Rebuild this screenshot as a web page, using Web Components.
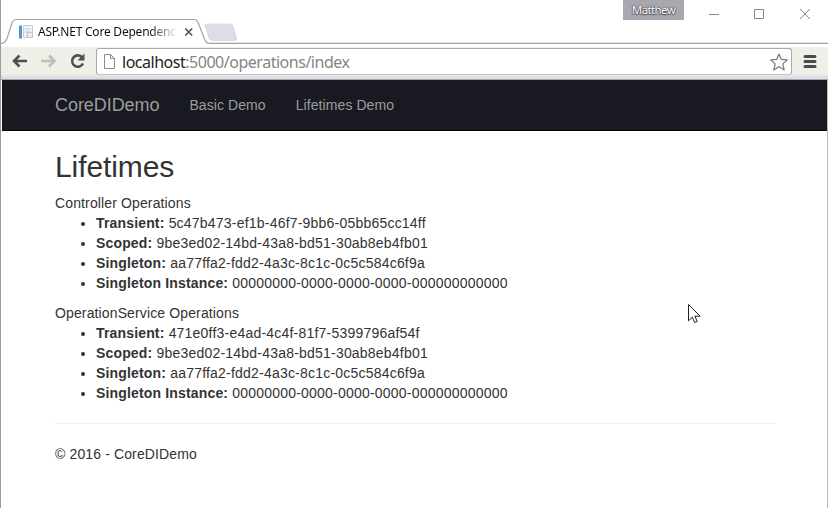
<!DOCTYPE html>
<html lang="en">
<head>
<meta charset="utf-8">
<title>ASP.NET Core Dependency Injection</title>
<style>
html,body{margin:0;height:100%;overflow:hidden;background:#fff}
body{font-family:"Liberation Sans",Arial,sans-serif}
</style>
</head>
<body>
<browser-window>
  <browser-tabs slot="tabs" user="Matthew"><span>ASP.NET Core Dependency</span></browser-tabs>
  <browser-toolbar slot="toolbar"><span slot="host">localhost</span><span slot="path">:5000/operations/index</span></browser-toolbar>
  <site-nav><span slot="brand">CoreDIDemo</span><span>Basic Demo</span><span>Lifetimes Demo</span></site-nav>
  <site-page>
    <span slot="title">Lifetimes</span>
    <operation-list heading="Controller Operations">
      <operation-item name="Transient:">5c47b473-ef1b-46f7-9bb6-05bb65cc14ff</operation-item>
      <operation-item name="Scoped:">9be3ed02-14bd-43a8-bd51-30ab8eb4fb01</operation-item>
      <operation-item name="Singleton:">aa77ffa2-fdd2-4a3c-8c1c-0c5c584c6f9a</operation-item>
      <operation-item name="Singleton Instance:">00000000-0000-0000-0000-000000000000</operation-item>
    </operation-list>
    <operation-list heading="OperationService Operations">
      <operation-item name="Transient:">471e0ff3-e4ad-4c4f-81f7-5399796af54f</operation-item>
      <operation-item name="Scoped:">9be3ed02-14bd-43a8-bd51-30ab8eb4fb01</operation-item>
      <operation-item name="Singleton:">aa77ffa2-fdd2-4a3c-8c1c-0c5c584c6f9a</operation-item>
      <operation-item name="Singleton Instance:">00000000-0000-0000-0000-000000000000</operation-item>
    </operation-list>
    <span slot="footer">© 2016 - CoreDIDemo</span>
  </site-page>
</browser-window>
<mouse-pointer></mouse-pointer>
<script>
const define = (name, html) => customElements.define(name, class extends HTMLElement {
  constructor() {
    super();
    this.attachShadow({mode: 'open'}).innerHTML = html;
  }
  connectedCallback() {
    this.shadowRoot.querySelectorAll('[data-attr]').forEach(el => {
      el.textContent = this.getAttribute(el.dataset.attr);
    });
  }
});

define('browser-window', `<style>
:host{display:flex;flex-direction:column;height:508px;width:828px;box-sizing:border-box}
.body{flex:1;border-left:1px solid #9c9c9c;border-right:1px solid #b8b8bc;background:#fff;padding-left:1px}
</style><slot name="tabs"></slot><slot name="toolbar"></slot><div class="body"><slot></slot></div>`);

define('browser-tabs', `<style>
:host{display:block;position:relative;height:47px;background:#fff;font:12px/16px "Noto Sans",sans-serif;color:#111}
.bg{position:absolute;left:0;top:0}
.row{position:relative;display:flex;align-items:flex-start}
.fav{margin:24px 3px 0 18px;flex:none}
.title{width:138px;margin-top:24px;overflow:hidden;white-space:nowrap;letter-spacing:-.22px;-webkit-mask-image:linear-gradient(90deg,#000 112px,transparent 140px);mask-image:linear-gradient(90deg,#000 112px,transparent 140px)}
.close{margin:27px 0 0 8px;flex:none}
.user{box-sizing:border-box;width:61px;height:20px;margin-left:429px;background:#a9a8b1;color:#fff;font-size:11.500px;line-height:20px;text-align:center;text-shadow:0 0 1px #333,0 0 2px #444,0 1px 1px #555;letter-spacing:-.6px}
.controls{margin:8px 0 0 24px}
</style>
<svg class="bg" width="828" height="47" fill="none">
<path d="M.5 0v47" stroke="#9c9c9c"/>
<path d="M205 25q1-1 2-1h23q2 0 3 2l3.500 12q.5 2-1.500 2.500h-22q-3 0-4-2z" fill="#dddde7" stroke="#d2d2d6" stroke-width=".7"/>
<path d="M1 43.500q4 0 6-5L12 23q1.300-3.500 4-3.500H194q3 0 4.500 4l6 15.500q1.500 4.500 5 4.500H828" stroke="#a5a4a7" stroke-width="1.200"/>
<path d="M208 42.500H828" stroke="#dedee9"/>
</svg>
<div class="row">
<svg class="fav" width="17" height="16" fill="none"><path d="M1 1.500h3v13H1z" fill="#4d97c9"/><path d="M5.500 1.500h9v12h-9z" fill="#f0f3f6" stroke="#c4cdd6"/><path d="M7 5h5M7 8h6M8 11h6" stroke="#bac7d3"/><path d="M9.500 8.500h5v5h-5z" fill="#eee" stroke="#c6c6c6"/></svg>
<div class="title"><slot></slot></div>
<svg class="close" width="10" height="10"><path d="M1.200 1.500l7 7M8.200 1.500l-7 7" stroke="#555" stroke-width="1.700"/></svg>
<div class="user" data-attr="user"></div>
<svg class="controls" width="106" height="13" fill="none" stroke="#888"><path d="M1 6.500h10M46.500 1.500h9v9h-9zM92 1l10 10M102 1L92 11"/></svg>
</div>`);

define('browser-toolbar', `<style>
:host{display:flex;box-sizing:border-box;height:33px;padding:1px 7px 0 9px;background:linear-gradient(#efeee7 0 27px,#dedee8 30px);border-left:1px solid #9c9c9c;border-bottom:1px solid #a4a4a8;font:16px/26px "Noto Sans",sans-serif}
.nav{width:86px;height:26px;flex:none}
.address{display:flex;width:696px;height:27px;box-sizing:border-box;border:1px solid #aaa9a7;border-bottom-color:#c3c2bd;border-radius:3px;background:#fff;align-items:center;padding:0 2px 0 6px}
.url{flex:1;margin-left:6px;white-space:pre;color:#858585;letter-spacing:-.48px}
.host{color:#222}
.menu{margin:6px 0 0 11px}
.page{flex:none}
</style>
<svg class="nav" fill="none" stroke-width="2.600"><path d="M17 13H4M9.500 7.500L4 13l5.500 5.500" stroke="#505052"/><path d="M31 13h13M39 7.500l5.500 5.500-5.500 5.500" stroke="#bdbdbb"/><path d="M73 15.500a5.700 5.700 0 1 1-1.200-6.500" stroke="#505052"/><path d="M74.500 5.500v7h-7z" fill="#505052"/></svg>
<div class="address">
<svg class="page" width="13" height="17" fill="#fff" stroke="#8c8c8c"><path d="M1.500 1.500h6l4 4v10h-10zM7.500 1.500v4h4"/></svg>
<div class="url"><slot class="host" name="host"></slot><slot name="path"></slot></div>
<svg width="20" height="20" fill="#fff" stroke="#777" stroke-width="1.200" stroke-linejoin="round"><path d="M10 2l2.300 5.400 6 .5-4.500 4 1.400 6L10 14.700 4.800 17.900l1.400-6-4.500-4 6-.5z"/></svg>
</div>
<svg class="menu" width="14" height="15" stroke="#4c4b4c" stroke-width="3" stroke-linecap="round"><path d="M2 2.500h10M2 7.500h10M2 12.500h10"/></svg>`);

define('site-nav', `<style>
:host{display:flex;box-sizing:border-box;height:51px;background:#191921;border-bottom:1px solid #050508;padding-left:53px;color:#9d9d9d;font-size:14px;line-height:50px;gap:30px;letter-spacing:.08px}
::slotted([slot=brand]){font-size:18px;letter-spacing:-.06px}
</style><slot name="brand"></slot><slot></slot>`);

define('site-page', `<style>
:host{display:block;width:720px;padding:19px 0 0 53px;font-size:14px;line-height:20px;color:#333;letter-spacing:.13px}
h2{margin:0 0 10px;font-size:30px;line-height:33px;font-weight:500;letter-spacing:-.1px}
hr{margin:20px 0;border:0;border-top:1px solid #eee}
p{margin:0}
</style><h2><slot name="title"></slot></h2><slot></slot><hr><p><slot name="footer"></slot></p>`);

define('operation-list', `<style>
:host{display:block;margin-bottom:10px}
:host(:last-of-type){margin-bottom:0}
ul{margin:0;padding-left:41px}
</style><div data-attr="heading"></div><ul><slot></slot></ul>`);

define('operation-item', `<style>
:host{display:list-item;list-style:disc;letter-spacing:.21px}
b{letter-spacing:.16px}
</style><b data-attr="name"></b> <slot></slot>`);

define('mouse-pointer', `<style>
:host{position:absolute;left:688px;top:304px;line-height:0}
</style><svg width="13" height="20"><path d="M.5 .5v16.300l3.800-3.600 2.300 5.300 2.600-1.100-2.300-5.200h5.200z" fill="#fff" stroke="#222" stroke-width="1"/></svg>`);
</script>
</body>
</html>
